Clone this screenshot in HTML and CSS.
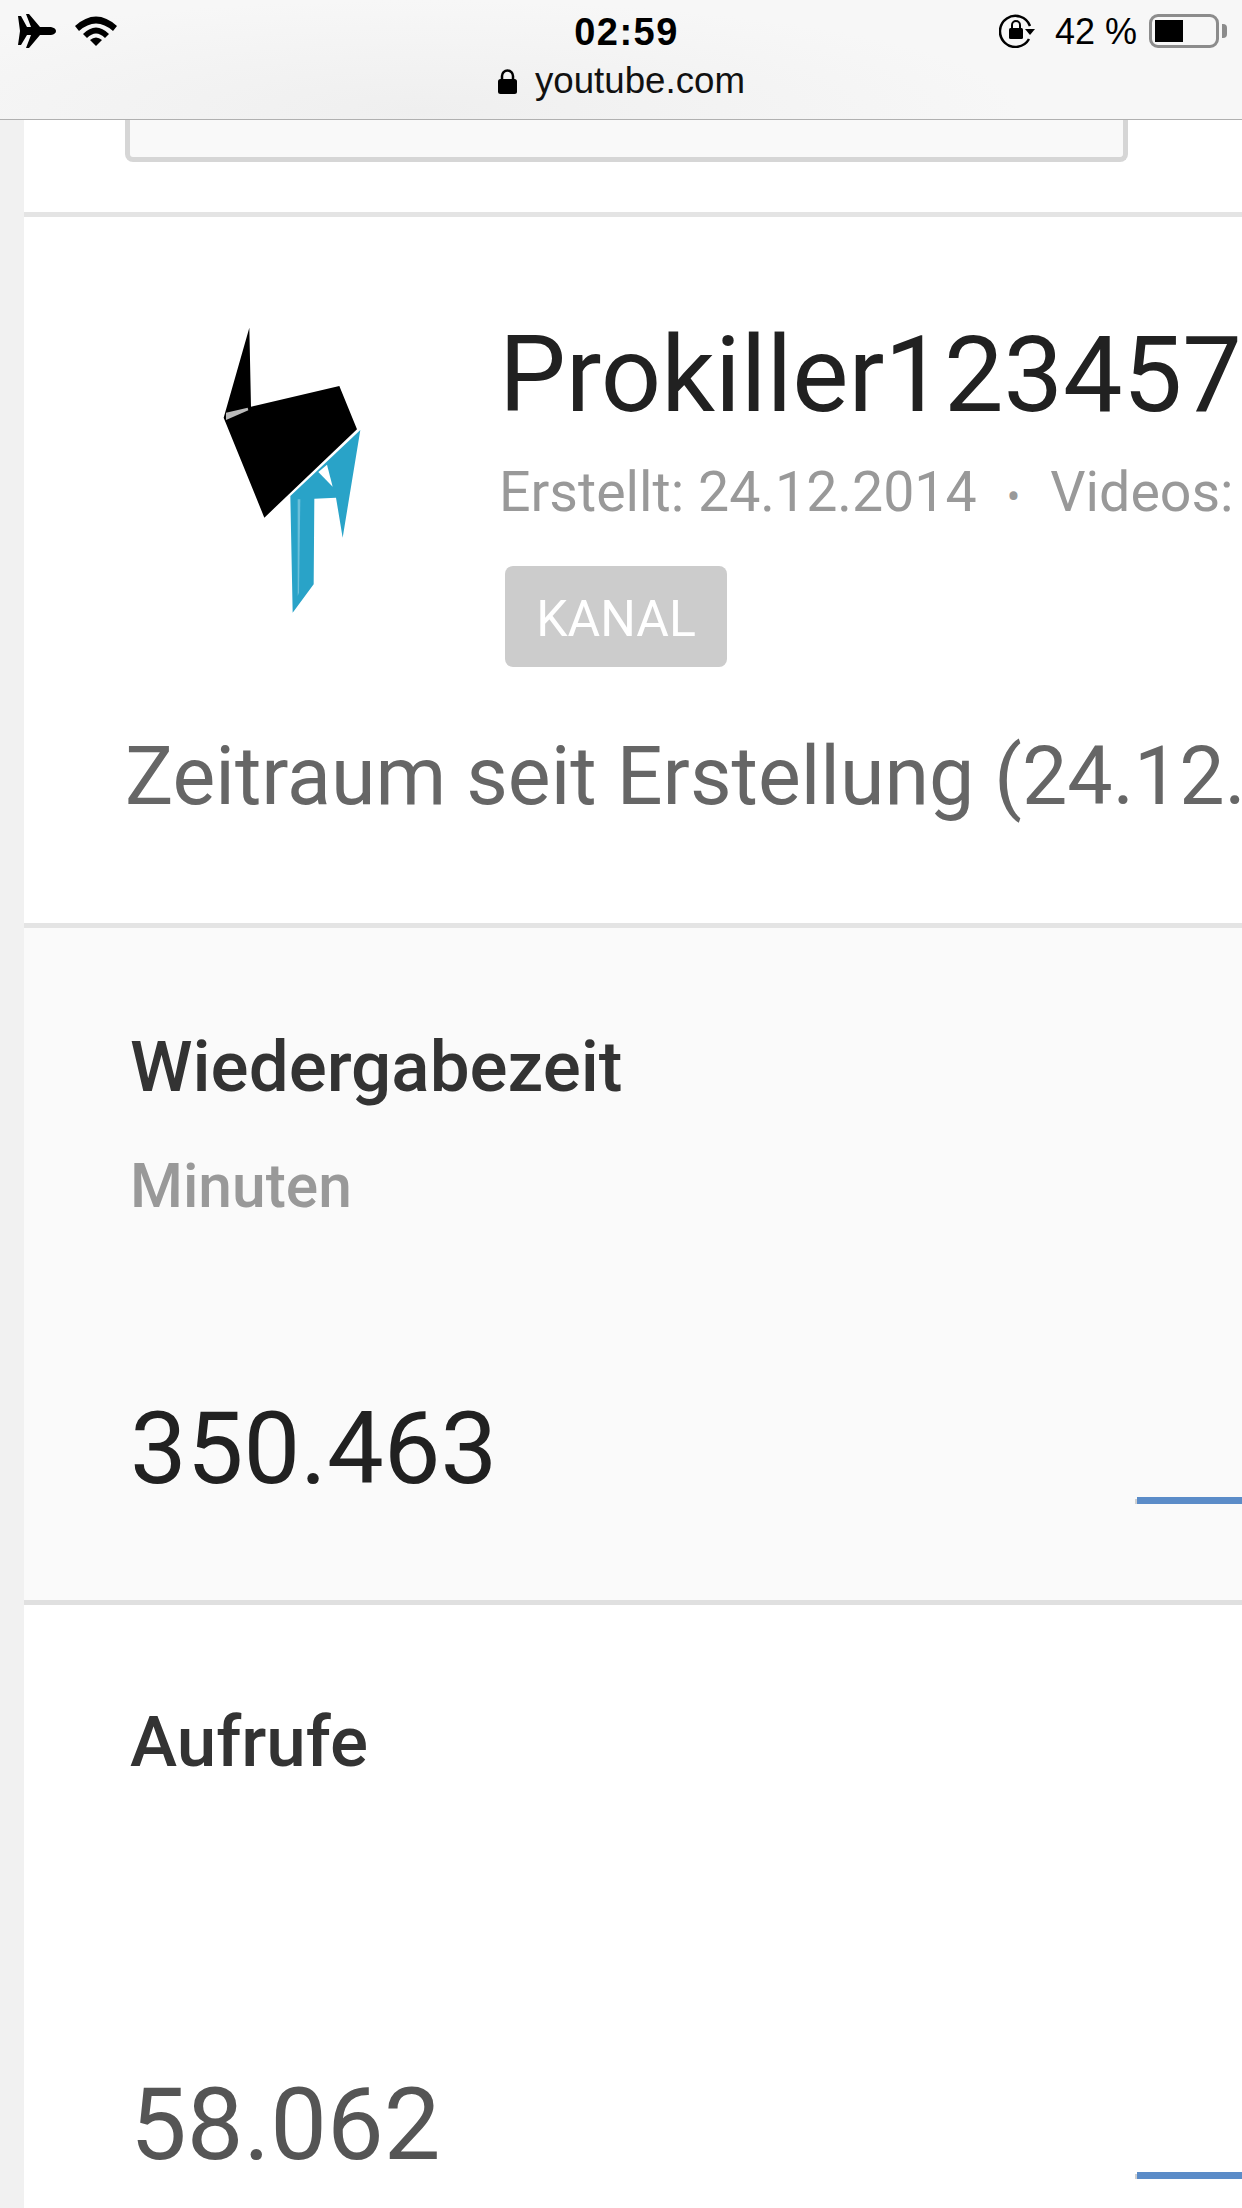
FILE: index.html
```html
<!DOCTYPE html>
<html lang="de">
<head>
<meta charset="utf-8">
<title>youtube.com</title>
<link rel="stylesheet" href="styles.css">
</head>
<body>
<header class="bar">
  <div class="status">
    <div class="status-left">
      <svg class="ic-plane" viewBox="0 0 38 34"><path d="M0 2 L3 2 L9 13 L13 13 L8 0 L11 0 L22 13 L33 13 Q38 14 38 17 Q38 20 33 21 L22 21 L11 34 L8 34 L13 21 L9 21 L3 31 L0 31 L2 17 Z"/></svg>
      <svg class="ic-wifi" viewBox="0 0 42 30"><path d="M0 10 Q21 -9 42 10 L38 15 Q21 0 4 15 Z"/><path d="M8 18 Q21 5 34 18 L30 22 Q21 13 12 22 Z"/><path d="M15 24 Q21 19 27 24 L21 30 Z"/></svg>
    </div>
    <div class="time">02:59</div>
    <div class="status-right">
      <svg class="ic-rot" viewBox="0 0 36 34"><path d="M30 25 A15.500 15.500 0 1 1 31 12" fill="none" stroke="#000" stroke-width="2.500"/><path d="M26 15 L36 15 L31 21 Z"/><rect x="10" y="14" width="14" height="11" rx="1.500"/><path d="M13 15 V11 A4 4 0 0 1 21 11 V15" fill="none" stroke="#000" stroke-width="2"/></svg>
      <span class="pct">42 %</span>
      <div class="battery"><div class="battery-fill"></div></div>
      <div class="battery-tip"></div>
    </div>
  </div>
  <div class="url">
    <svg class="ic-lock" viewBox="0 0 19 25"><rect x="0" y="10" width="19" height="15" rx="2.500"/><path d="M4 11 V7 A5.500 5.500 0 0 1 15 7 V11" fill="none" stroke="#000" stroke-width="2.500"/></svg>
    <span>youtube.com</span>
  </div>
</header>
<main class="page">
  <div class="cut-box"></div>
  <section class="channel">
    <div class="channel-row">
      <svg class="logo" viewBox="150 80 420 870">
        <g class="logo-art">
          <path fill="#29a3c8" d="M568 392 L515 715 L495 595 L430 598 L428 855 L365 940 L358 590 Z"/>
          <path fill="#fff" d="M442 518 L468 496 L485 562 Z"/>
          <path fill="#6cc0da" d="M380 600 L388 600 L384 880 L380 890 Z"/>
          <path fill="#000" d="M235 85 L240 322 L505 260 L558 390 L280 655 L158 355 Z"/>
          <path fill="#bbb" d="M165 340 L230 325 L232 333 L165 362 Z"/>
        </g>
      </svg>
      <div class="channel-info">
        <h1 class="channel-name">Prokiller123457</h1>
        <p class="channel-meta">Erstellt: 24.12.2014<span class="dot">•</span>Videos:</p>
        <span class="badge">KANAL</span>
      </div>
    </div>
    <p class="period">Zeitraum seit Erstellung (24.12.</p>
  </section>
  <section class="metric metric-alt">
    <h2 class="metric-title">Wiedergabezeit</h2>
    <p class="metric-unit">Minuten</p>
    <div class="metric-value">350.463</div>
    <div class="spark"><div class="spark-stub"></div><div class="spark-line"></div></div>
  </section>
  <section class="metric metric-plain">
    <h2 class="metric-title">Aufrufe</h2>
    <div class="metric-value metric-value-grey">58.062</div>
    <div class="spark"><div class="spark-stub"></div><div class="spark-line"></div></div>
  </section>
</main>
</body>
</html>
```
FILE: styles.css
```css
* { box-sizing: border-box; }
html, body { margin: 0; padding: 0; }
body {
  width: 1242px;
  height: 2208px;
  overflow: hidden;
  background: #f1f1f1;
  font-family: Roboto, sans-serif;
}
.bar {
  height: 120px;
  padding: 12px 15px 0 18px;
  border-bottom: 1px solid #b0b0b0;
  background: radial-gradient(ellipse 600px 110px at 420px 110px, #efefef, #f7f7f7);
  font-family: "Liberation Sans", sans-serif;
  color: #000;
}
.status {
  display: grid;
  grid-template-columns: 1fr auto 1fr;
  align-items: center;
  height: 36px;
}
.status-left { display: flex; align-items: center; gap: 19px; }
.ic-plane { width: 38px; height: 34px; display: block; }
.ic-wifi { width: 42px; height: 30px; display: block; }
.time { font-size: 38px; font-weight: 700; letter-spacing: 1.500px; line-height: 36px; padding-top: 2px; padding-left: 8px; }
.status-right { display: flex; align-items: center; justify-content: flex-end; }
.ic-rot { width: 36px; height: 34px; display: block; margin-right: 20px; }
.pct { font-size: 36px; line-height: 36px; margin-right: 12px; padding-top: 2px; }
.battery {
  width: 70px;
  height: 34px;
  border: 3px solid #8c8c8c;
  border-radius: 9px;
  padding: 3px;
}
.battery-fill { width: 28px; height: 100%; background: #000; }
.battery-tip { width: 5px; height: 14px; background: #8c8c8c; border-radius: 0 4px 4px 0; margin-left: 3px; }
.url {
  display: flex;
  justify-content: center;
  align-items: center;
  gap: 18px;
  margin-top: 11px;
  font-size: 36.700px;
  line-height: 44px;
  color: #111;
  padding-right: 2px;
}
.ic-lock { width: 19px; height: 25px; display: block; }

.page {
  margin-left: 24px;
  background: #fff;
}
.cut-box {
  width: 1003px;
  height: 42px;
  margin-left: 101px;
  background: #f9f9f9;
  border: 5px solid #d6d6d6;
  border-top: 0;
  border-radius: 0 0 8px 8px;
}
.channel {
  margin-top: 50px;
  height: 716px;
  padding: 0 0 0 101px;
  border-top: 5px solid #e4e4e4;
  border-bottom: 5px solid #e4e4e4;
  overflow: hidden;
}
.channel-row { display: flex; align-items: flex-start; padding-top: 109px; height: 512px; }
.logo { width: 140px; height: 290px; display: block; margin-left: 96px; flex: none; }
.logo-art { filter: blur(2px); }
.channel-info { margin-left: 138px; margin-top: -3px; white-space: nowrap; }
.channel-name { margin: 0; font-size: 106px; line-height: 104px; font-weight: 400; color: #212121; }
.channel-meta { margin: 34px 0 0; font-size: 55.500px; line-height: 64px; color: #999; }
.dot { margin: 0 30px; font-size: 40px; }
.badge {
  display: block;
  width: 222px;
  height: 101px;
  margin: 36px 0 0 6px;
  border-radius: 8px;
  background: #ccc;
  color: #fff;
  font-size: 50px;
  line-height: 107px;
  text-align: center;
}
.period {
  margin: 0;
  font-size: 80.700px;
  line-height: 96px;
  color: #666;
  white-space: nowrap;
}
.metric { position: relative; height: 677px; padding: 0 0 0 106px; }
.metric-alt { background: #fafafa; border-bottom: 5px solid #e0e0e0; }
.metric-plain { background: #fff; }
.metric-title { margin: 0; font-size: 71px; line-height: 80px; font-weight: 500; color: #333; }
.metric-alt .metric-title { padding-top: 99px; }
.metric-plain .metric-title { padding-top: 97px; }
.metric-unit { margin: 0; padding-top: 45px; font-size: 60.500px; line-height: 70px; font-weight: 500; color: #999; }
.metric-value { margin-top: 0; font-size: 101px; line-height: 112px; color: #212121; }
.metric-alt .metric-value { padding-top: 171px; }
.metric-plain .metric-value { padding-top: 287px; }
.metric-value-grey { color: #555; }
.spark { position: absolute; left: 1111px; right: 0; display: flex; align-items: flex-end; height: 7px; }
.metric-alt .spark { top: 569px; }
.metric-plain .spark { top: 567px; }
.spark-stub { width: 2px; height: 5px; background: #d0d0d0; }
.spark-line { flex: 1; height: 7px; background: #5b8cc8; }
```
